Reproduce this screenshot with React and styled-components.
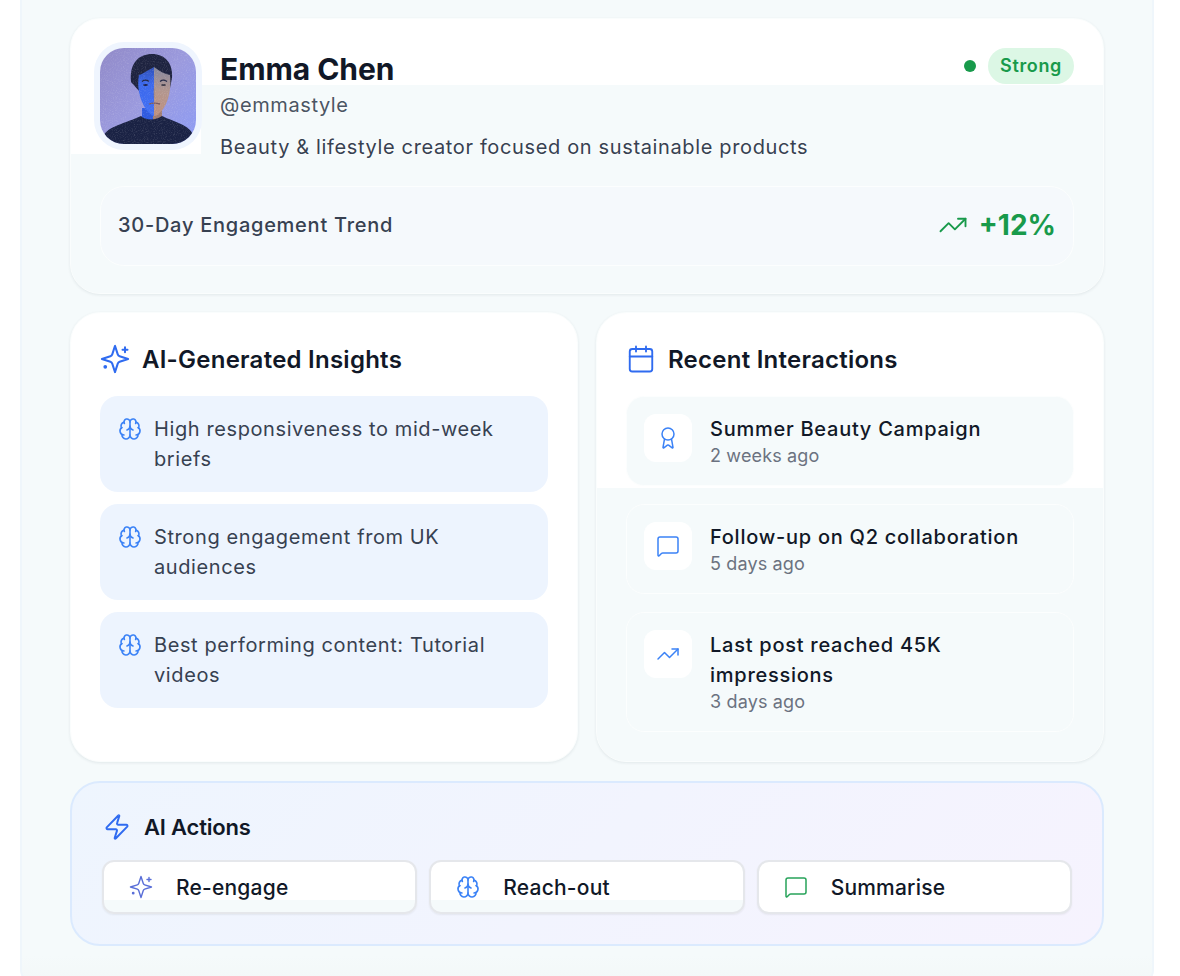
import React from 'react'
import styled, { createGlobalStyle } from 'styled-components'
import { Award, Brain, Calendar, MessageSquare, TrendingUp, Zap } from 'lucide-react'

const GlobalStyle = createGlobalStyle`
  html, body {
    margin: 0;
    height: 976px;
    overflow: hidden;
    background: #fff;
    font-family: Inter, "Noto Sans", sans-serif;
  }
  * { box-sizing: border-box; }
`

const Page = styled.div`
  padding: 0 26px 0 20px;
`

const Panel = styled.div`
  height: 984px;
  padding: 18px 48px 0;
  display: flex;
  flex-direction: column;
  gap: 18px;
  background: linear-gradient(180deg, #f5fafb 0, #f5fafb 955px, #f3f8f8 100%);
  border: 2px solid #eff6fb;
  border-top: 0;
  border-radius: 0 0 14px 14px;
`

const Surface = styled.section`
  border-radius: 30px;
  background-color: #f5fafb;
  box-shadow: 0 1px 3px rgba(30, 50, 70, 0.09);
  border: 1px solid #fafdfd;
`

const ProfileCard = styled(Surface)`
  height: 276px;
  padding: 29px 29px 28px;
  background-image: linear-gradient(#fff, #fff), linear-gradient(#fff, #fff);
  background-size: 100% 66px, 130px 135px;
  background-repeat: no-repeat;
`

const ProfileTop = styled.div`
  display: flex;
  gap: 24px;
`

const Avatar = styled.div`
  width: 96px;
  height: 96px;
  flex: none;
  border-radius: 24px;
  overflow: hidden;
  box-shadow: 0 0 0 6px #eff5fe;
  svg { display: block; }
`

const ProfileText = styled.div`
  flex: 1;
`

const NameRow = styled.div`
  display: flex;
  align-items: flex-start;
  justify-content: space-between;
`

const Name = styled.h1`
  margin: 0;
  font-size: 30px;
  line-height: 42px;
  font-weight: 700;
  letter-spacing: -0.06px;
  color: #111827;
`

const Status = styled.div`
  display: flex;
  align-items: center;
  gap: 12px;
`

const Dot = styled.span`
  width: 12px;
  height: 12px;
  border-radius: 50%;
  background: #189a4b;
`

const Pill = styled.span`
  height: 36px;
  padding: 0 12px;
  border-radius: 18px;
  background: #dcf7e5;
  color: #189a4b;
  font-size: 18px;
  line-height: 36px;
  font-weight: 600;
  letter-spacing: 0.65px;
`

const Handle = styled.div`
  font-size: 20px;
  line-height: 30px;
  letter-spacing: 0.6px;
  color: #4b5563;
  text-shadow: 0 0 3px #fff;
`

const Bio = styled.p`
  margin: 12px 0 0;
  font-size: 20px;
  line-height: 30px;
  letter-spacing: 0.64px;
  color: #374151;
  text-shadow: 0 0 3px #fff;
`

const TrendBox = styled.div`
  height: 80px;
  margin-top: 24px;
  padding: 0 17px 2px;
  display: flex;
  align-items: center;
  justify-content: space-between;
  border: 1px solid #fcfefe;
  border-radius: 24px;
  background: #f5f9fc;
`

const TrendLabel = styled.span`
  font-size: 20px;
  font-weight: 500;
  letter-spacing: 0.74px;
  color: #374151;
`

const TrendValue = styled.span`
  display: flex;
  align-items: center;
  gap: 11px;
  font-size: 28px;
  font-weight: 700;
  color: #189a4b;
`

const Columns = styled.div`
  display: grid;
  grid-template-columns: 508px 508px;
  gap: 18px;
  height: 450px;
`

const InsightsCard = styled(Surface)`
  padding: 29px;
  background-color: #fff;
`

const RecentCard = styled(Surface)`
  padding: 29px;
  background-image: linear-gradient(#fff, #fff);
  background-size: 100% 175px;
  background-repeat: no-repeat;
`

const CardTitle = styled.h2`
  margin: 0 0 20px;
  height: 34px;
  display: flex;
  align-items: center;
  gap: 12px;
  font-size: 24px;
  font-weight: 600;
  letter-spacing: 0.25px;
  color: #111827;
`

const Stack = styled.div`
  display: flex;
  flex-direction: column;
  gap: ${p => p.$gap}px;
`

const Insight = styled.div`
  height: 96px;
  padding: 18px;
  display: flex;
  gap: 12px;
  border-radius: 18px;
  background: #edf4fe;
  color: #374151;
  font-size: 20px;
  line-height: 30px;
  letter-spacing: 0.6px;
  svg { flex: none; margin-top: 3px; }
`

const Interaction = styled.div`
  padding: 17px;
  display: flex;
  gap: 18px;
  border: 1px solid #fcfefe;
  border-radius: 18px;
  background: #f5fafb;
`

const IconTile = styled.div`
  width: 48px;
  height: 48px;
  flex: none;
  display: flex;
  align-items: center;
  justify-content: center;
  border-radius: 12px;
  background: #fff;
`

const InteractionTitle = styled.div`
  font-size: 20px;
  line-height: 30px;
  font-weight: 500;
  letter-spacing: 0.74px;
  color: #111827;
`

const InteractionTime = styled.div`
  font-size: 18px;
  line-height: 24px;
  letter-spacing: 0.15px;
  color: #6b7280;
`

const ActionsCard = styled.section`
  height: 165px;
  margin-top: 1px;
  padding: 30px;
  border: 2px solid #dbeafe;
  border-radius: 30px;
  background: linear-gradient(135deg, #eef5fe, #f6f3fe);
`

const ActionsTitle = styled.h3`
  margin: 0 0 19px;
  height: 28px;
  display: flex;
  align-items: center;
  gap: 13px;
  padding-left: 1px;
  font-size: 22px;
  font-weight: 600;
  letter-spacing: -0.2px;
  color: #111827;
`

const ActionRow = styled.div`
  display: grid;
  grid-template-columns: repeat(3, 1fr);
  gap: 12px;
`

const ActionButton = styled.button`
  height: 54px;
  padding: 0 0 0 25px;
  display: flex;
  align-items: center;
  gap: 23px;
  border: 2px solid #e5e7eb;
  border-radius: 12px;
  background: ${p => (p.$fade ? 'linear-gradient(#fff 0, #fff 38px, #f5fafb 38px)' : '#fff')};
  box-shadow: 0 1px 2px rgba(0, 0, 0, 0.06);
  font: 500 21px Inter, sans-serif;
  letter-spacing: 0.2px;
  color: #111827;
`

const SparkleIcon = ({ size, color, weight }) => (
  <svg width={size} height={size} viewBox='0 0 24 24' fill='none' stroke={color} strokeWidth={weight} strokeLinecap='round' strokeLinejoin='round'>
    <path d='m12 1.5-2.2 6.8a2.3 2.3 0 0 1-1.5 1.5L1.5 12l6.8 2.2a2.3 2.3 0 0 1 1.5 1.5l2.2 6.8 2.2-6.8a2.3 2.3 0 0 1 1.5-1.5l6.8-2.2-6.8-2.2a2.3 2.3 0 0 1-1.5-1.5Z' />
    <path d='M20 2.5v4M18 4.5h4' />
    <circle cx='4.2' cy='18.2' r='0.7' fill={color} />
  </svg>
)

const Portrait = () => (
  <svg width='96' height='96' viewBox='0 0 96 96'>
    <defs>
      <linearGradient id='wall' x1='0' y1='0' x2='1' y2='1'>
        <stop offset='0' stopColor='#918ac8' />
        <stop offset='0.5' stopColor='#9b9ade' />
        <stop offset='1' stopColor='#8d9cf5' />
      </linearGradient>
      <linearGradient id='cool' x1='0' y1='0' x2='0' y2='1'>
        <stop offset='0' stopColor='#2f50b8' />
        <stop offset='0.35' stopColor='#3b68ec' />
        <stop offset='1' stopColor='#4270f5' />
      </linearGradient>
      <linearGradient id='warm' x1='0' y1='0' x2='0' y2='1'>
        <stop offset='0' stopColor='#85879f' />
        <stop offset='0.5' stopColor='#b3968e' />
        <stop offset='1' stopColor='#bd8f7f' />
      </linearGradient>
      <filter id='grain' x='0' y='0' width='100%' height='100%'>
        <feTurbulence type='fractalNoise' baseFrequency='0.9' numOctaves='2' seed='4' />
        <feColorMatrix values='0 0 0 0 1  0 0 0 0 1  0 0 0 0 1  1.6 0 0 0 -0.75' />
      </filter>
    </defs>
    <rect width='96' height='96' fill='url(#wall)' />
    <path d='M31 34C29 15 39 6 52 6c13 0 21 9 20 24l-2 10-30 4z' fill='#1e2340' />
    <path d='M42 60v14h11V60z' fill='#2f5ae0' />
    <path d='M53 60h9v12l-9 3z' fill='#a07d74' />
    <path d='M54 19c-6 3-11 7-15 8-2 10 0 21 4 29 3 6 7 11 11 12z' fill='url(#cool)' />
    <path d='M54 19c5 4 11 7 16 8 1 10 0 20-4 29-3 6-8 12-12 12z' fill='url(#warm)' />
    <path d='M42 33.500c2-1.500 5-1.500 7 0M60 33.500c2-1.500 5-1.500 7 0' stroke='#232846' strokeWidth='1.300' fill='none' />
    <ellipse cx='45.500' cy='37' rx='2.500' ry='1' fill='#1c2450' />
    <ellipse cx='63.500' cy='37' rx='2.500' ry='1' fill='#3e3a48' />
    <path d='M54 40v10' stroke='#7c6f78' strokeWidth='0.800' opacity='0.6' />
    <path d='M49 56c3-1 7-1 11 0' stroke='#7a5a60' strokeWidth='1.300' fill='none' />
    <path d='M4 88c2-9 22-13 37-20 4 4 14 5 21 0 12 6 28 9 31 19v9H5z' fill='#1a2244' />
    <rect width='96' height='96' filter='url(#grain)' opacity='0.22' />
  </svg>
)

const insights = [
  'High responsiveness to mid-week briefs',
  'Strong engagement from UK audiences',
  'Best performing content: Tutorial videos',
]

const interactions = [
  { icon: Award, title: 'Summer Beauty Campaign', time: '2 weeks ago' },
  { icon: MessageSquare, title: 'Follow-up on Q2 collaboration', time: '5 days ago' },
  { icon: TrendingUp, title: 'Last post reached 45K impressions', time: '3 days ago' },
]

const App = () => (
  <Page>
    <GlobalStyle />
    <Panel>
      <ProfileCard>
        <ProfileTop>
          <Avatar><Portrait /></Avatar>
          <ProfileText>
            <NameRow>
              <Name>Emma Chen</Name>
              <Status>
                <Dot />
                <Pill>Strong</Pill>
              </Status>
            </NameRow>
            <Handle>@emmastyle</Handle>
            <Bio>Beauty &amp; lifestyle creator focused on sustainable products</Bio>
          </ProfileText>
        </ProfileTop>
        <TrendBox>
          <TrendLabel>30-Day Engagement Trend</TrendLabel>
          <TrendValue>
            <TrendingUp size={30} color='#189a4b' strokeWidth={1.5} />
            +12%
          </TrendValue>
        </TrendBox>
      </ProfileCard>

      <Columns>
        <InsightsCard>
          <CardTitle>
            <SparkleIcon size={30} color='#2f6bf0' weight={1.6} />
            AI-Generated Insights
          </CardTitle>
          <Stack $gap={12}>
            {insights.map(text => (
              <Insight key={text}>
                <Brain size={24} color='#3b82f6' strokeWidth={1.6} />
                <span>{text}</span>
              </Insight>
            ))}
          </Stack>
        </InsightsCard>

        <RecentCard>
          <CardTitle>
            <Calendar size={30} color='#2f6bf0' strokeWidth={1.5} />
            Recent Interactions
          </CardTitle>
          <Stack $gap={18}>
            {interactions.map(({ icon: Icon, title, time }) => (
              <Interaction key={title}>
                <IconTile><Icon size={24} color='#3b82f6' strokeWidth={1.5} /></IconTile>
                <div>
                  <InteractionTitle>{title}</InteractionTitle>
                  <InteractionTime>{time}</InteractionTime>
                </div>
              </Interaction>
            ))}
          </Stack>
        </RecentCard>
      </Columns>

      <ActionsCard>
        <ActionsTitle>
          <Zap size={28} color='#2f6bf0' strokeWidth={1.7} />
          AI Actions
        </ActionsTitle>
        <ActionRow>
          <ActionButton $fade>
            <SparkleIcon size={24} color='#5a6fd8' weight={1.4} />
            Re-engage
          </ActionButton>
          <ActionButton $fade>
            <Brain size={24} color='#3b82f6' strokeWidth={1.6} />
            Reach-out
          </ActionButton>
          <ActionButton>
            <MessageSquare size={24} color='#27a35a' strokeWidth={1.5} />
            Summarise
          </ActionButton>
        </ActionRow>
      </ActionsCard>
    </Panel>
  </Page>
)

export default App
